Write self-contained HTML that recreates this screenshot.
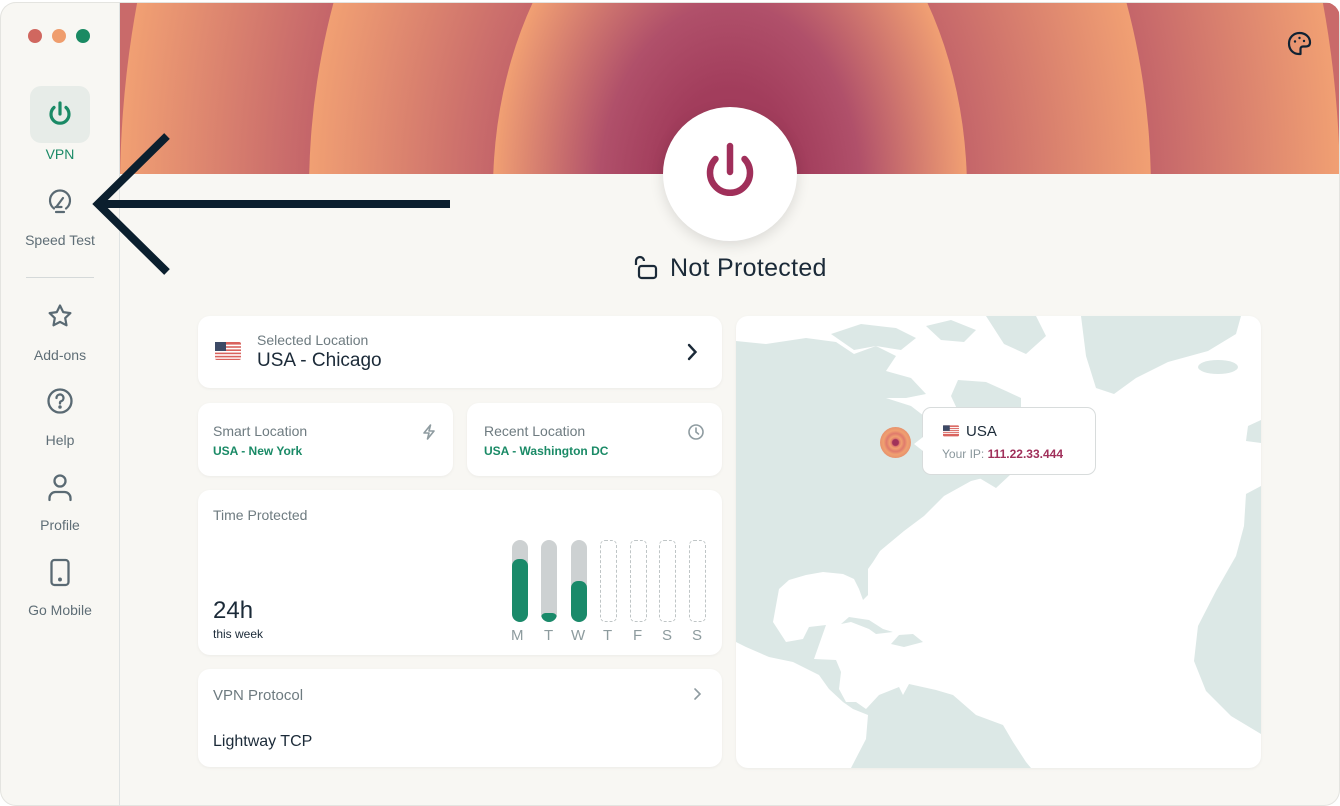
<!DOCTYPE html>
<html><head><meta charset="utf-8"><style>
*{margin:0;padding:0;box-sizing:border-box}
body{width:1340px;height:806px;background:#fff;font-family:"Liberation Sans",sans-serif;overflow:hidden;position:relative}
.win{position:absolute;left:0;top:2px;width:1340px;height:804px;background:#f8f7f3;border-radius:16px;overflow:hidden;box-shadow:inset 0 0 0 1px #e4e4e0}
.side{position:absolute;left:0;top:0;width:120px;height:100%;border-right:1px solid #dfe3e3}
.lbl{position:absolute;left:0;width:120px;text-align:center;font-size:14px;color:#5f6e76}
.ic{position:absolute}
.card{position:absolute;background:#fff;border-radius:12px;box-shadow:0 1px 3px rgba(0,0,0,.05)}
.t{position:absolute;white-space:nowrap}
</style></head><body>
<div class="win">
<div class="side">
 <div style="position:absolute;left:28px;top:27px;width:14px;height:14px;border-radius:50%;background:#d0675f"></div>
 <div style="position:absolute;left:52px;top:27px;width:14px;height:14px;border-radius:50%;background:#ef9d6d"></div>
 <div style="position:absolute;left:76px;top:27px;width:14px;height:14px;border-radius:50%;background:#1a8a63"></div>
 <div style="position:absolute;left:30px;top:84px;width:60px;height:57px;border-radius:11px;background:#e7ece8"></div>
 <svg class="ic" style="left:45px;top:97px" width="30" height="30" viewBox="0 0 30 30"><path d="M15 4v11M9 8.5a9 9 0 1 0 12 0" fill="none" stroke="#1a8a66" stroke-width="3.2" stroke-linecap="round"/></svg>
 <div class="lbl" style="top:144px;color:#1a8a66">VPN</div>
 <svg class="ic" style="left:46px;top:186px" width="28" height="28" viewBox="0 0 28 28" fill="none" stroke="#5a6a73" stroke-width="2.2" stroke-linecap="round"><path d="M8 20.5a10 10 0 1 1 12 0"/><path d="M10 24h8"/><path d="M11 18l6-8"/><path d="M9.5 19h6"/></svg>
 <div class="lbl" style="top:230px">Speed Test</div>
 <div style="position:absolute;left:26px;top:275px;width:68px;height:1px;background:#d5d9d9"></div>
 <svg class="ic" style="left:46px;top:300px" width="28" height="28" viewBox="0 0 28 28"><path d="M14 3.5l3.2 6.6 7.2 1-5.2 5 1.3 7.2L14 19.9l-6.5 3.4 1.3-7.2-5.2-5 7.2-1z" fill="none" stroke="#5a6a73" stroke-width="2.2" stroke-linejoin="round"/></svg>
 <div class="lbl" style="top:345px">Add-ons</div>
 <svg class="ic" style="left:46px;top:385px" width="28" height="28" viewBox="0 0 28 28" fill="none" stroke="#5a6a73" stroke-width="2.3" stroke-linecap="round"><circle cx="14" cy="14" r="11.5"/><path d="M10.5 11a3.5 3.5 0 1 1 4.5 3.3c-.7.3-1 .8-1 1.5v.7"/><circle cx="14" cy="20" r=".6" fill="#5a6a73"/></svg>
 <div class="lbl" style="top:430px">Help</div>
 <svg class="ic" style="left:46px;top:471px" width="28" height="30" viewBox="0 0 28 30" fill="none" stroke="#5a6a73" stroke-width="2.3" stroke-linecap="round"><circle cx="14" cy="8" r="5.5"/><path d="M3.5 27v-2a6 6 0 0 1 6-6h9a6 6 0 0 1 6 6v2"/></svg>
 <div class="lbl" style="top:515px">Profile</div>
 <svg class="ic" style="left:48px;top:556px" width="24" height="30" viewBox="0 0 24 30" fill="none" stroke="#5a6a73" stroke-width="2.3"><rect x="3.5" y="2" width="17" height="25" rx="3"/><circle cx="12" cy="21.5" r=".8" fill="#5a6a73"/></svg>
 <div class="lbl" style="top:600px">Go Mobile</div>
</div>
<svg style="position:absolute;left:120px;top:1px" width="1219" height="171" viewBox="120 2 1219 171">
 <defs>
  <radialGradient id="g3" cx="0.5" cy="0.5" r="0.5"><stop offset="0.69" stop-color="#c4656a"/><stop offset="1" stop-color="#f1a073"/></radialGradient>
  <radialGradient id="g2" cx="0.5" cy="0.5" r="0.5"><stop offset="0.56" stop-color="#c4656a"/><stop offset="1" stop-color="#f1a073"/></radialGradient>
  <radialGradient id="g1" cx="0.5" cy="0.5" r="0.5"><stop offset="0.3" stop-color="#a23d5c"/><stop offset="0.55" stop-color="#b0506a"/><stop offset="1" stop-color="#f1a073"/></radialGradient>
 </defs>
 <rect x="120" y="0" width="1220" height="180" fill="#c96a6a"/>
 <ellipse cx="730" cy="190" rx="790" ry="1050" fill="#c96a6a"/>
 <ellipse cx="730" cy="190" rx="610" ry="800" fill="url(#g3)"/>
 <ellipse cx="730" cy="190" rx="421" ry="560" fill="url(#g2)"/>
 <ellipse cx="730" cy="190" rx="237" ry="340" fill="url(#g1)"/>
 <g transform="translate(1287,30)" fill="none" stroke="#0f2233" stroke-width="2.2" stroke-linejoin="round"><path d="M12 23C6 23 2 18.5 2 12.5S6.5 2 12.5 2 23 6 23 11.5c0 3-2 4-4.5 4h-2.5c-1.5 0-2.5 1-2.5 2.5v5z"/><circle cx="8" cy="10.5" r="1.2" fill="#0f2233" stroke="none"/><circle cx="12.5" cy="7" r="1.2" fill="#0f2233" stroke="none"/><circle cx="17" cy="10" r="1.2" fill="#0f2233" stroke="none"/></g>
</svg>
<div style="position:absolute;left:663px;top:105px;width:134px;height:134px;border-radius:50%;background:#fff;box-shadow:0 4px 14px rgba(0,0,0,.12)"></div>
<svg class="ic" style="left:697px;top:138px" width="66" height="66" viewBox="0 0 66 66"><path d="M33 6v26M18.5 19a20 20 0 1 0 29 0" fill="none" stroke="#a02f5a" stroke-width="6.5" stroke-linecap="round"/></svg>
<svg class="ic" style="left:633px;top:253px" width="26" height="26" viewBox="0 0 26 26" fill="none" stroke="#1b2a38" stroke-width="2.2"><path d="M3 10V6a4 4 0 0 1 8 0"/><rect x="6" y="11" width="17" height="12" rx="2.5"/></svg>
<div class="t" style="left:670px;top:252px;font-size:25px;letter-spacing:.3px;color:#1b2a38">Not Protected</div>

<div class="card" style="left:198px;top:314px;width:524px;height:72px"></div>
<svg class="ic" style="left:215px;top:340px" width="26" height="20" viewBox="0 0 26 20"><rect width="26" height="18" rx="2" fill="#d9635e"/><g fill="#fff"><rect y="2.6" width="26" height="1.6"/><rect y="5.8" width="26" height="1.6"/><rect y="9" width="26" height="1.6"/><rect y="12.2" width="26" height="1.6"/><rect y="15.4" width="26" height="1.4"/></g><rect width="11" height="9" fill="#3d4a66"/></svg>
<div class="t" style="left:257px;top:330px;font-size:14px;color:#6e7b80">Selected Location</div>
<div class="t" style="left:257px;top:348px;font-size:19px;color:#1b2a38">USA - Chicago</div>
<svg class="ic" style="left:684px;top:340px" width="16" height="20" viewBox="0 0 16 20"><path d="M5 3l6.5 7L5 17" fill="none" stroke="#1b2a38" stroke-width="2.4" stroke-linecap="round"/></svg>

<div class="card" style="left:198px;top:401px;width:255px;height:73px"></div>
<div class="t" style="left:213px;top:421px;font-size:14px;color:#6e7b80">Smart Location</div>
<div class="t" style="left:213px;top:442px;font-size:12px;font-weight:bold;color:#1a8a66">USA - New York</div>
<svg class="ic" style="left:421px;top:421px" width="16" height="18" viewBox="0 0 16 18"><path d="M9.5 2L3 10h5l-1.5 6L13 8H8z" fill="none" stroke="#8e9ba0" stroke-width="1.6" stroke-linejoin="round"/></svg>
<div class="card" style="left:467px;top:401px;width:255px;height:73px"></div>
<div class="t" style="left:484px;top:421px;font-size:14px;color:#6e7b80">Recent Location</div>
<div class="t" style="left:484px;top:442px;font-size:12px;font-weight:bold;color:#1a8a66">USA - Washington DC</div>
<svg class="ic" style="left:687px;top:421px" width="18" height="18" viewBox="0 0 18 18" fill="none" stroke="#8e9ba0" stroke-width="1.6" stroke-linecap="round"><circle cx="9" cy="9" r="7"/><path d="M9 5v4l2.5 2"/></svg>

<div class="card" style="left:198px;top:488px;width:524px;height:165px"></div>
<div class="t" style="left:213px;top:505px;font-size:14px;color:#6e7b80">Time Protected</div>
<div class="t" style="left:213px;top:595px;font-size:24px;color:#1b2a38">24h</div>
<div class="t" style="left:213px;top:625px;font-size:12px;color:#1b2a38">this week</div>
<div style="position:absolute;left:512px;top:538px;width:16px;height:82px;border-radius:8px;background:#cdd1d2;overflow:hidden"><div style="position:absolute;bottom:0;width:16px;height:63px;border-radius:7px;background:#1a8a6a"></div></div>
<div style="position:absolute;left:541px;top:538px;width:16px;height:82px;border-radius:8px;background:#cdd1d2;overflow:hidden"><div style="position:absolute;bottom:0;width:16px;height:9px;border-radius:5px;background:#1a8a6a"></div></div>
<div style="position:absolute;left:571px;top:538px;width:16px;height:82px;border-radius:8px;background:#cdd1d2;overflow:hidden"><div style="position:absolute;bottom:0;width:16px;height:41px;border-radius:7px;background:#1a8a6a"></div></div>
<div style="position:absolute;left:600px;top:538px;width:17px;height:82px;border-radius:5px;border:1px dashed #bfc5c6"></div>
<div style="position:absolute;left:630px;top:538px;width:17px;height:82px;border-radius:5px;border:1px dashed #bfc5c6"></div>
<div style="position:absolute;left:659px;top:538px;width:17px;height:82px;border-radius:5px;border:1px dashed #bfc5c6"></div>
<div style="position:absolute;left:689px;top:538px;width:17px;height:82px;border-radius:5px;border:1px dashed #bfc5c6"></div>
<div class="t" style="left:511px;top:625px;font-size:15px;color:#8d9b9e">M</div>
<div class="t" style="left:544px;top:625px;font-size:15px;color:#8d9b9e">T</div>
<div class="t" style="left:571px;top:625px;font-size:15px;color:#8d9b9e">W</div>
<div class="t" style="left:603px;top:625px;font-size:15px;color:#8d9b9e">T</div>
<div class="t" style="left:633px;top:625px;font-size:15px;color:#8d9b9e">F</div>
<div class="t" style="left:662px;top:625px;font-size:15px;color:#8d9b9e">S</div>
<div class="t" style="left:692px;top:625px;font-size:15px;color:#8d9b9e">S</div>

<div class="card" style="left:198px;top:667px;width:524px;height:98px"></div>
<div class="t" style="left:213px;top:685px;font-size:15px;color:#6e7b80">VPN Protocol</div>
<svg class="ic" style="left:691px;top:684px" width="12" height="16" viewBox="0 0 12 16"><path d="M4 3l5 5-5 5" fill="none" stroke="#8e9ba0" stroke-width="1.6" stroke-linecap="round"/></svg>
<div class="t" style="left:213px;top:731px;font-size:16px;color:#1b2a38">Lightway TCP</div>

<div class="card" style="left:736px;top:314px;width:525px;height:452px;overflow:hidden">
<svg width="525" height="452" viewBox="0 0 525 452" fill="#dce8e6">
 <path d="M0,25 L30,28 L70,22 L100,26 L118,38 L140,30 L160,40 L150,55 L175,62 L190,78 L170,82 L150,82 L175,90 L188,100 L205,110 L215,125 L225,140 L245,150 L255,160 L235,165 L208,180 L188,200 L168,215 L144,235 L137,246 L132,253 L132,279 L127,284 L123,273 L118,263 L107,258 L87,256 L70,259 L53,264 L43,273 L37,306 L50,326 L67,323 L73,311 L90,309 L78,343 L100,344 L105,356 L103,373 L110,386 L120,386 L130,393 L143,379 L163,371 L167,379 L173,368 L200,374 L217,379 L240,399 L267,409 L277,426 L290,446 L295,452 L115,452 L130,423 L132,399 L117,393 L107,386 L93,373 L83,359 L57,346 L33,341 L10,331 L0,326 Z"/>
 <path d="M215,80 L222,64 L250,66 L270,75 L285,82 L285,92 L255,98 L232,100 L222,95 Z"/>
 <path d="M240,160 L258,148 L275,158 L260,172 Z"/>
 <path d="M95,18 L125,8 L160,12 L180,22 L165,34 L140,30 L118,34 Z"/>
 <path d="M190,10 L215,4 L240,14 L228,26 L205,24 Z"/>
 <path d="M250,0 L300,0 L310,20 L290,38 L268,28 Z"/>
 <path d="M345,0 L505,0 L500,18 L472,35 L432,46 L400,62 L378,78 L360,72 L350,40 Z"/>
 <ellipse cx="482" cy="51" rx="20" ry="7"/>
 <path d="M525,104 L512,110 L510,125 L525,127 Z"/>
 <path d="M525,170 L510,178 L508,210 L500,240 L480,275 L462,310 L458,345 L470,375 L495,400 L525,418 Z"/>
 <path d="M105,308 L113,301 L133,304 L147,313 L157,316 L140,318 L133,313 L115,306 Z"/>
 <path d="M163,319 L177,318 L187,326 L168,331 L155,328 Z"/>
</svg>
</div>
<div style="position:absolute;left:880px;top:425px;width:31px;height:31px;border-radius:50%;background:radial-gradient(circle,#a0325a 0 3px,#e07a6c 4px,#f0a070 6px,#e07a6c 9px,#f0a070 12px,#e8946e 15px)"></div>
<div style="position:absolute;left:922px;top:405px;width:174px;height:68px;background:#fff;border:1px solid #d8dcdc;border-radius:9px"></div>
<div style="position:absolute;left:914px;top:435px;width:0;height:0;border-top:7px solid transparent;border-bottom:7px solid transparent;border-right:9px solid #fff"></div>
<svg class="ic" style="left:943px;top:423px" width="16" height="13" viewBox="0 0 26 20"><rect width="26" height="18" rx="2" fill="#d9635e"/><g fill="#fff"><rect y="2.6" width="26" height="1.6"/><rect y="5.8" width="26" height="1.6"/><rect y="9" width="26" height="1.6"/><rect y="12.2" width="26" height="1.6"/></g><rect width="11" height="9" fill="#3d4a66"/></svg>
<div class="t" style="left:966px;top:421px;font-size:15px;color:#1b2a38">USA</div>
<div class="t" style="left:942px;top:445px;font-size:12px;color:#8a979c">Your IP: <b style="color:#a02f5a">111.22.33.444</b></div>
</div>
<svg style="position:absolute;left:0;top:0" width="460" height="290"><g stroke="#0b1f2e" stroke-width="8" fill="none"><path d="M100 204H450"/><path d="M167 136L98 204L167 272"/></g></svg>
</body></html>
